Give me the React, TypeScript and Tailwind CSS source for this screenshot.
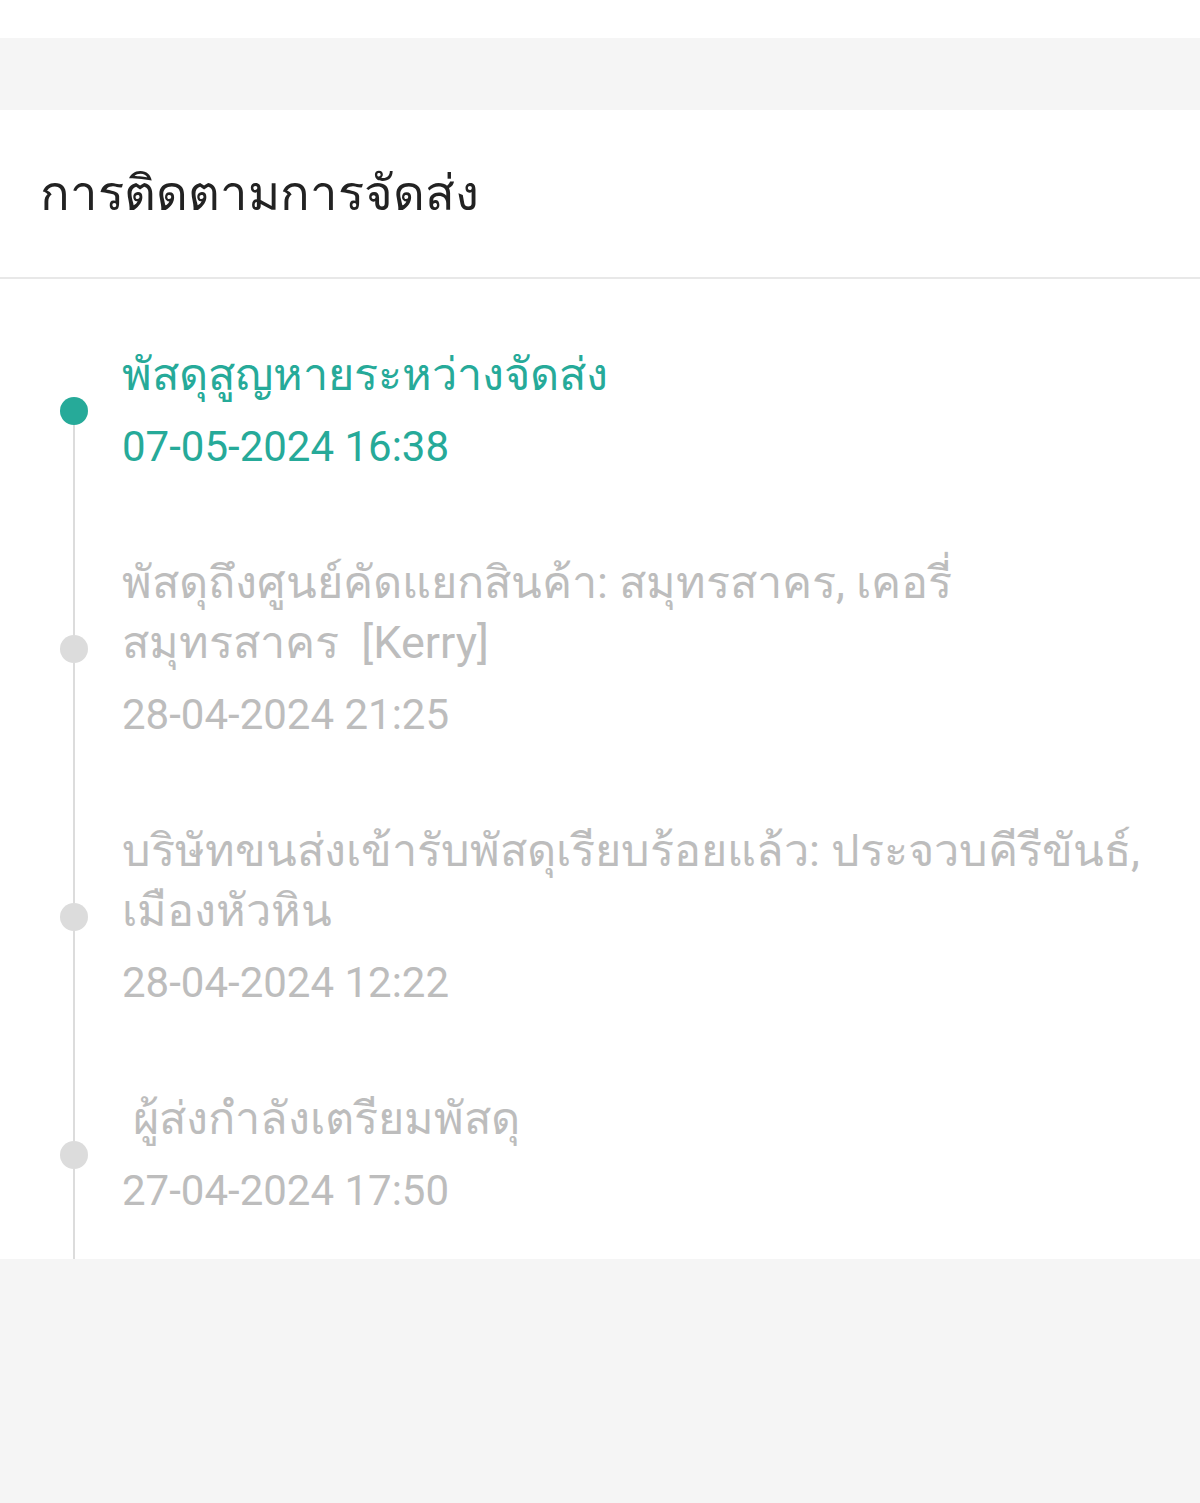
import React from 'react';

type Step = { title: string; time: string; active?: boolean };

const steps: Step[] = [
  { title: 'พัสดุสูญหายระหว่างจัดส่ง', time: '07-05-2024 16:38', active: true },
  { title: 'พัสดุถึงศูนย์คัดแยกสินค้า: สมุทรสาคร, เคอรี่ สมุทรสาคร  [Kerry]', time: '28-04-2024 21:25' },
  { title: 'บริษัทขนส่งเข้ารับพัสดุเรียบร้อยแล้ว: ประจวบคีรีขันธ์, เมืองหัวหิน', time: '28-04-2024 12:22' },
  { title: ' ผู้ส่งกำลังเตรียมพัสดุ', time: '27-04-2024 17:50' },
];

export default function App() {
  return (
    <main className="min-h-[1503px] bg-[#f5f5f5] font-['Roboto','Noto_Sans',sans-serif]">
      <div className="h-[38px] bg-white" />
      <div className="h-[72px]" />

      {/* header */}
      <div className="h-[169px] bg-white border-b-2 border-[#e8e8e8] flex items-center px-[40px]">
        <h1 className="text-[49px] leading-none text-[#222222]">การติดตามการจัดส่ง</h1>
      </div>

      {/* timeline */}
      <section className="bg-white pt-[28px]">
        {steps.map((s, i) => (
          <div key={i} className="flex">
            <div className="w-[28px] ml-[60px] mr-[34px] flex flex-col items-center">
              <div className={`w-[2px] flex-1 ${i === 0 ? 'bg-transparent' : 'bg-[#dcdcdc]'}`} />
              <div className={`w-[28px] h-[28px] rounded-full shrink-0 ${s.active ? 'bg-[#26aa99]' : 'bg-[#dcdcdc]'}`} />
              <div className="w-[2px] flex-1 bg-[#dcdcdc]" />
            </div>
            <div className={`flex-1 py-[38px] pr-[60px] ${s.active ? 'text-[#26aa99]' : 'text-[#bdbdbd]'}`}>
              <p className="text-[45px] leading-[60px] whitespace-pre-wrap">{s.title}</p>
              <p className="text-[42px] leading-[60px] mt-[12px]">{s.time}</p>
            </div>
          </div>
        ))}
      </section>
    </main>
  );
}
